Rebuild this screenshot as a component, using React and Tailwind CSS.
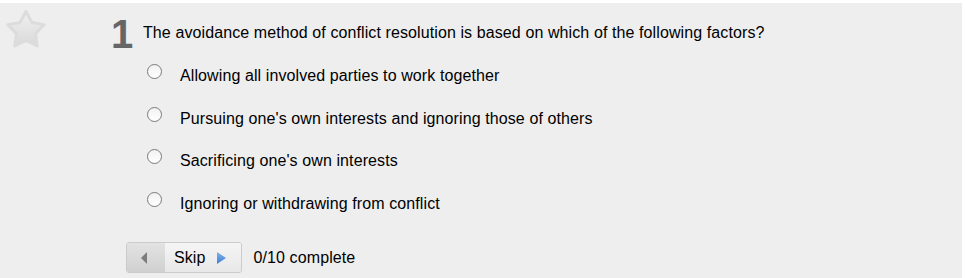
import React from "react";

function Star() {
  return (
    <svg width="40" height="40" viewBox="0 0 40 40">
      <defs>
        <linearGradient id="sg" x1="0" y1="0" x2="0" y2="1">
          <stop offset="0" stopColor="#f0f0f0" />
          <stop offset="1" stopColor="#d9d9d9" />
        </linearGradient>
      </defs>
      <polygon
        points="20,1.5 25.88,12.41 38.07,14.63 29.51,23.59 31.17,35.87 20,30.5 8.83,35.87 10.49,23.59 1.93,14.63 14.12,12.41"
        fill="url(#sg)"
        stroke="#dcdcdc"
        strokeWidth="3"
        strokeLinejoin="round"
      />
    </svg>
  );
}

function Radio() {
  return (
    <span className="mt-[-3px] block w-[15px] h-[15px] shrink-0 rounded-full border border-[#7a7a7a] bg-gradient-to-b from-[#f2f2f2] to-white" />
  );
}

const options = [
  "Allowing all involved parties to work together",
  "Pursuing one's own interests and ignoring those of others",
  "Sacrificing one's own interests",
  "Ignoring or withdrawing from conflict",
];

const gaps = ["mt-0", "mt-[25px]", "mt-[24px]", "mt-[25px]"];

export default function App() {
  return (
    <div className="bg-white pt-[3px] pr-[3px] w-[965px] h-[278px]">
      <div className="bg-[#eeeeee] h-[275px] flex font-['Liberation_Sans',Arial,sans-serif] text-black tracking-[0.1px]">
        <div className="w-[111px] shrink-0 pl-[6px] pt-[7px]">
          <Star />
        </div>
        <div className="flex-1 pt-[11px]">
          <div className="flex items-start">
            <div className="w-[32px] shrink-0 text-[40px] leading-[40px] font-bold text-[#666666] tracking-normal">1</div>
            <div className="mt-[10px] text-[16px] leading-[18px]">
              The avoidance method of conflict resolution is based on which of the following factors?
            </div>
          </div>
          <div className="mt-[13px] pl-[36px] flex flex-col">
            {options.map((o, i) => (
              <div key={i} className={`flex items-start text-[16px] leading-[18px] ${gaps[i]}`}>
                <Radio />
                <span className="ml-[18px]">{o}</span>
              </div>
            ))}
          </div>
          <div className="mt-[29px] pl-[15px] flex items-center">
            <div className="flex h-[31px] rounded-[3px] border border-[#cbcbcb] overflow-hidden">
              <div className="w-[38px] flex items-center pl-[14px] bg-gradient-to-b from-[#e3e3e3] to-[#d0d0d0]">
                <svg width="6" height="12" viewBox="0 0 6 12">
                  <polygon points="6,0 0,6 6,12" fill="#7c7c7c" />
                </svg>
              </div>
              <div className="flex items-center pl-[9px] pr-[15px] bg-gradient-to-b from-[#f5f5f5] to-[#e8e8e8] text-[16px] leading-[18px]">
                <span>Skip</span>
                <svg className="ml-[11px]" width="9" height="12" viewBox="0 0 9 12">
                  <defs>
                    <linearGradient id="bg" x1="0" y1="0" x2="0" y2="1">
                      <stop offset="0" stopColor="#7fb2ec" />
                      <stop offset="1" stopColor="#3f7fd6" />
                    </linearGradient>
                  </defs>
                  <polygon points="0,0 9,6 0,12" fill="url(#bg)" />
                </svg>
              </div>
            </div>
            <span className="ml-[12px] text-[16px] leading-[18px]">0/10 complete</span>
          </div>
        </div>
      </div>
    </div>
  );
}
